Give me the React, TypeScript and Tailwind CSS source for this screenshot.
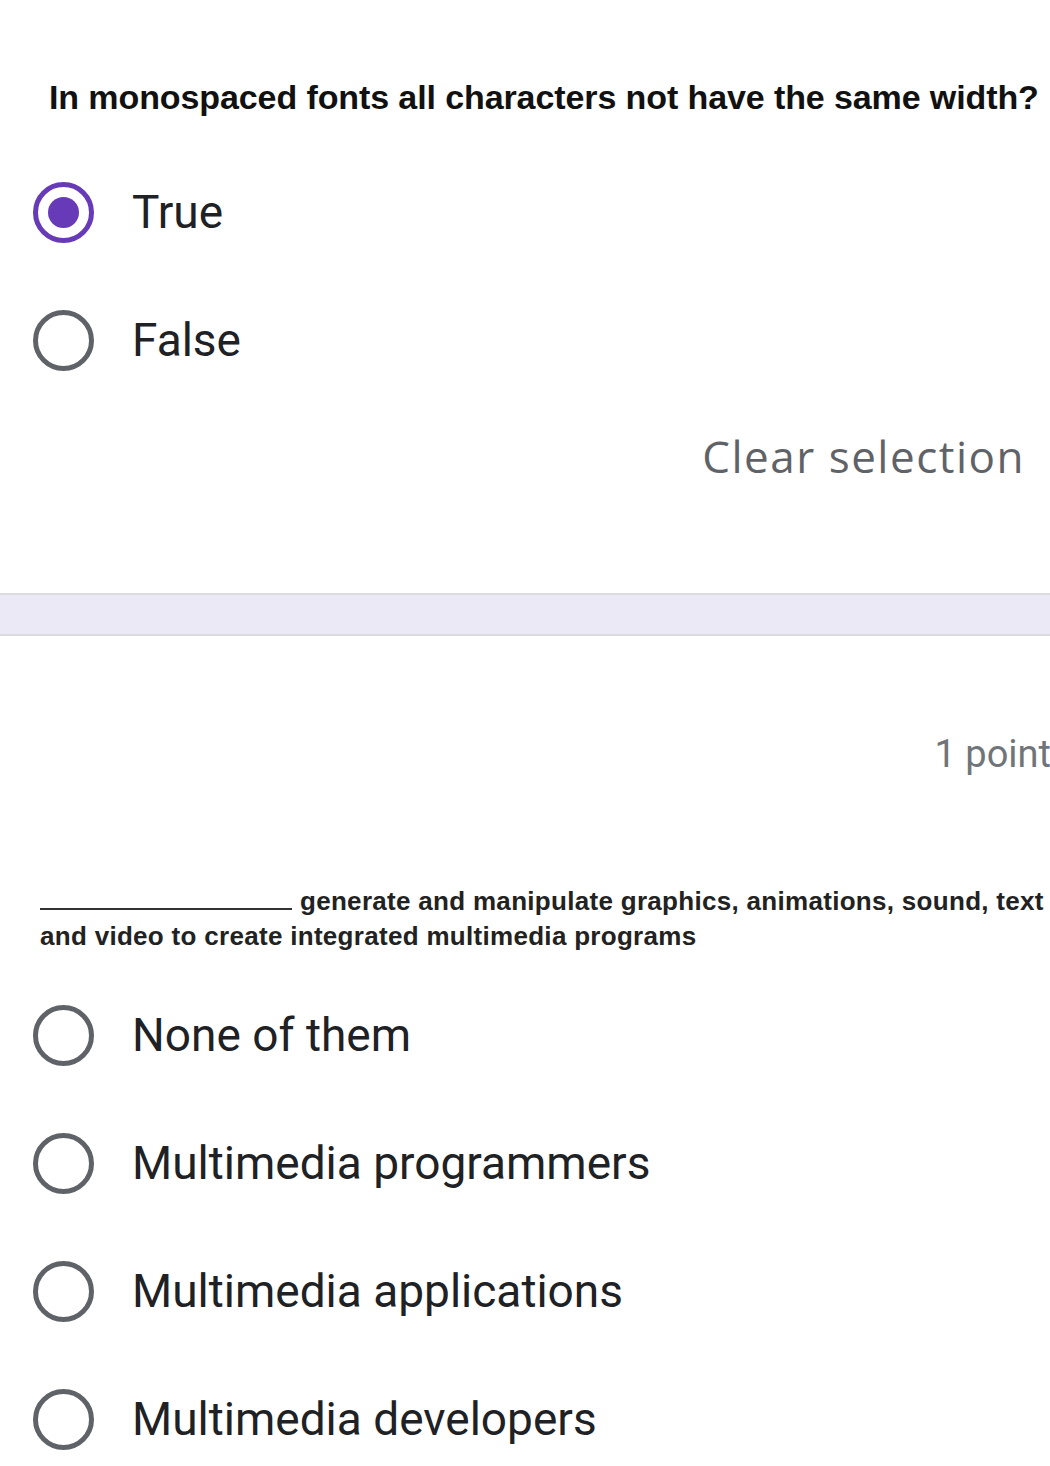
import React from "react"

type RadioProps = {
    label: string
    checked?: boolean
}

function Radio({ label, checked }: RadioProps) {
    return (
        <div className="flex h-[128px] items-center">
            <div className="ml-[32px] flex h-[62px] w-[62px] items-center justify-center">
                {checked ? (
                    <div className="flex h-[61px] w-[61px] items-center justify-center rounded-full border-[5px] border-[#673ab7]">
                        <div className="h-[31px] w-[31px] rounded-full bg-[#673ab7]" />
                    </div>
                ) : (
                    <div className="h-[61px] w-[61px] rounded-full border-[5px] border-[#5f6368]" />
                )}
            </div>
            <span className="ml-[38px] font-['Roboto',sans-serif] text-[46px] leading-none text-[#202124]">
                {label}
            </span>
        </div>
    )
}

export default function App() {
    return (
        <div className="w-[1050px] h-[1466px] overflow-hidden bg-white">
            {/* first question */}
            <div className="pt-[77px] pl-[49px]">
                <p className="font-['Liberation_Sans',Arial,sans-serif] font-bold text-[34px] leading-[40px] tracking-[-0.1px] text-[#111] whitespace-nowrap">
                    In monospaced fonts all characters not have the same width?
                </p>
            </div>

            <div className="mt-[31px]">
                <Radio label="True" checked />
                <Radio label="False" />
            </div>

            <div className="flex justify-end pr-[25px] mt-[24px]">
                <span className="font-['Open_Sans',sans-serif] text-[44px] leading-[56px] tracking-[1.5px] text-[#5f6368]">
                    Clear selection
                </span>
            </div>

            <div className="mt-[109px] h-[43px] border-y-2 border-[#dadce0] bg-[#ece9f7]" />

            {/* second question */}
            <div className="flex justify-end mt-[95px] -mr-[1px]">
                <span className="font-['Roboto',sans-serif] text-[38px] leading-[46px] text-[#70757a] whitespace-nowrap">
                    1 point
                </span>
            </div>

            <div className="mt-[107px] pl-[40px] pr-[2px]">
                <p className="font-['Liberation_Sans',Arial,sans-serif] font-bold text-[26px] leading-[35px] tracking-[0.3px] text-[#222]">
                    <span className="inline-block w-[252px] border-b-2 border-[#333] mr-[8px] align-baseline" />
                    generate and manipulate graphics, animations, sound, text and video to create integrated multimedia programs
                </p>
            </div>

            <div className="mt-[17px]">
                <Radio label="None of them" />
                <Radio label="Multimedia programmers" />
                <Radio label="Multimedia applications" />
                <Radio label="Multimedia developers" />
            </div>
        </div>
    )
}
